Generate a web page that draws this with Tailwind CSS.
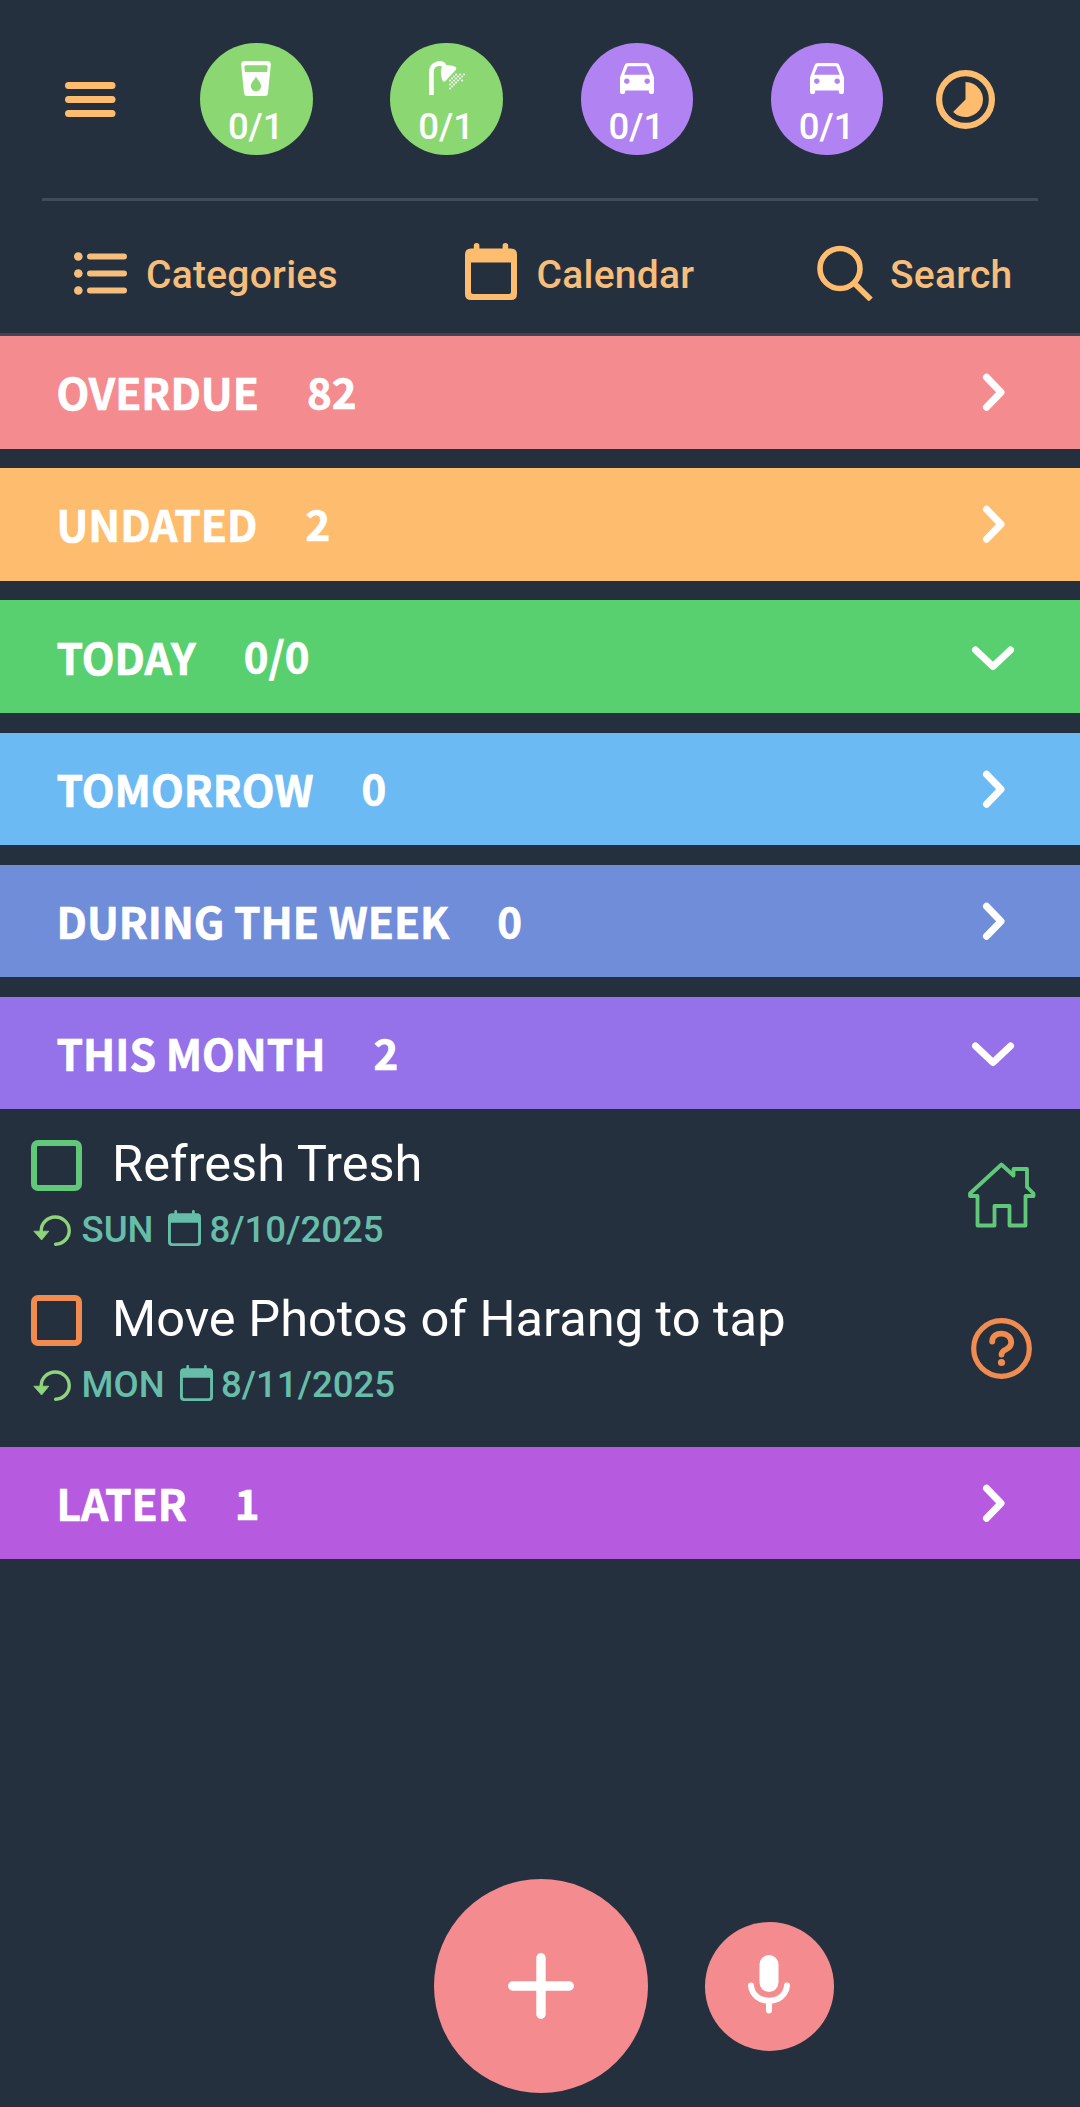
<!DOCTYPE html>
<html lang="en">
<head>
<meta charset="utf-8">
<title>Tasks</title>
<script src="https://cdn.jsdelivr.net/npm/@tailwindcss/browser@4"></script>
</head>
<body class="bg-[#25303f]">
<svg class="hidden">
  <symbol id="right" viewBox="0 0 44 44"><path d="M15.500 7.300 L30 22.300 L15.500 37.300" fill="none" stroke="currentColor" stroke-width="7" stroke-linecap="round" stroke-linejoin="round"/></symbol>
  <symbol id="down" viewBox="0 0 44 44"><path d="M4.5 15 L22 31.500 L39.5 15" fill="none" stroke="currentColor" stroke-width="7" stroke-linecap="round" stroke-linejoin="round"/></symbol>
  <symbol id="car" viewBox="0 0 34 31"><path fill="currentColor" fill-rule="evenodd" d="M8 0H26Q28.6 0 29.4 2.3L34 14.5V28.4Q34 31 31.4 31Q28.8 31 28.8 28.4V27.4H5.2V28.4Q5.2 31 2.6 31Q0 31 0 28.4V14.5L4.6 2.3Q5.4 0 8 0ZM7.8 3.2L4.2 11.8H29.8L26.2 3.2ZM6.8 15.4a2.8 2.8 0 1 0 .01 0ZM27.2 15.4a2.8 2.8 0 1 0 .01 0Z"/></symbol>
  <symbol id="cal" viewBox="0 0 52 57"><path fill="currentColor" fill-rule="evenodd" d="M6 5.5H8.8V2.8a2.8 2.8 0 0 1 5.6 0V5.5H37.6V2.8a2.8 2.8 0 0 1 5.6 0V5.5H46Q52 5.5 52 11.5V51Q52 57 46 57H6Q0 57 0 51V11.5Q0 5.5 6 5.5ZM6 19.5V49Q6 51 8 51H44Q46 51 46 49V19.5Z"/></symbol>
  <symbol id="calthin" viewBox="0 0 33 36"><path fill="currentColor" fill-rule="evenodd" d="M4 3.3H6.3V1.4a1.4 1.4 0 0 1 2.8 0V3.3H24V1.4a1.4 1.4 0 0 1 2.8 0V3.3H29Q33 3.3 33 7.3V32Q33 36 29 36H4Q0 36 0 32V7.3Q0 3.3 4 3.3ZM2.9 12.8V31.6Q2.9 33.2 4.5 33.2H28.5Q30.1 33.2 30.1 31.6V12.8Z"/></symbol>
  <symbol id="repeat" viewBox="0 0 38 31"><path d="M8.2 17 V15.5 A14 13.6 0 1 1 22.6 29.2" fill="none" stroke="currentColor" stroke-width="3.4" stroke-linecap="round"/><path fill="currentColor" d="M0.8 16.2H15.8L8.6 25Z" stroke="currentColor" stroke-width=".8" stroke-linejoin="round"/></symbol>
</svg>
<div class="flex h-[2107px] w-[1080px] flex-col overflow-hidden bg-[#25303f] font-['Roboto'] text-white">
  <header class="shrink-0 px-[42px]">
    <div class="flex h-[198px] items-center pl-[22.500px] text-[#fdbc6e]">
      <svg class="h-[35px] w-[51px]" viewBox="0 0 51 35"><g fill="currentColor"><rect width="50.500" height="7" rx="3.5"/><rect y="14" width="50.500" height="7" rx="3.5"/><rect y="28" width="50.500" height="7" rx="3.5"/></g></svg>
      <div class="ml-[84.500px] flex gap-[77.800px] text-white">
        <div class="flex size-[112.500px] flex-col items-center rounded-full bg-[#8bd772] pt-[18px]">
          <svg class="h-[35px] w-[30px]" viewBox="0 0 30 35"><path fill="currentColor" fill-rule="evenodd" d="M3.5 0H26.5Q30 0 29.8 4L27 32Q26.7 35 24 35H6Q3.3 35 3 32L.2 4Q0 0 3.5 0ZM3.4 6L3.9 11H26.1L26.6 6Q26.7 4.2 25 4.2H5Q3.3 4.2 3.4 6ZM15 15.5C13.5 19 9.8 21.8 9.8 25A5.2 5.2 0 0 0 20.2 25C20.2 21.8 16.5 19 15 15.5Z"/></svg>
          <span class="mt-[12px] mr-[1px] text-[36.500px] leading-[38px] font-medium">0/1</span>
        </div>
        <div class="flex size-[112.500px] flex-col items-center rounded-full bg-[#8bd772] pt-[18px]">
          <svg class="h-[35px] w-[36px]" viewBox="0 0 36 35"><path d="M2.4 34V11C2.4 1.5 12.5 1 15.5 5" fill="none" stroke="currentColor" stroke-width="4.8"/><path fill="currentColor" d="M13.5 5.5C16 3 21 4.500 25 5.300C27.600 6 27.800 7.800 26.700 9L16.500 20C15.500 21 14 20.800 13.500 19.500C12 15 10.800 8 13.500 5.500Z"/><g fill="none" stroke="currentColor" stroke-width="2" stroke-linecap="round" stroke-dasharray="0 2.830"><path d="M27 13.500L20.500 20M31 13.500L20.500 24M35 13.500L20.500 28M33 19.500L31 21.500"/></g></svg>
          <span class="mt-[12px] mr-[1px] text-[36.500px] leading-[38px] font-medium">0/1</span>
        </div>
        <div class="flex size-[112.500px] flex-col items-center rounded-full bg-[#b182f1] pt-[20px]">
          <svg class="h-[31px] w-[34px]"><use href="#car"/></svg>
          <span class="mt-[14px] mr-[1px] text-[36.500px] leading-[38px] font-medium">0/1</span>
        </div>
        <div class="flex size-[112.500px] flex-col items-center rounded-full bg-[#b182f1] pt-[20px]">
          <svg class="h-[31px] w-[34px]"><use href="#car"/></svg>
          <span class="mt-[14px] mr-[1px] text-[36.500px] leading-[38px] font-medium">0/1</span>
        </div>
      </div>
      <svg class="ml-[52.500px] size-[59px]" viewBox="0 0 59 59"><circle cx="29.500" cy="29.500" r="26.400" fill="none" stroke="currentColor" stroke-width="6.200"/><path fill="currentColor" d="M29.500 29.500V12A17.500 17.500 0 1 1 17.100 41.900Z"/></svg>
    </div>
    <div class="h-[3px] bg-[#424b58]"></div>
  </header>
  <nav class="flex h-[132px] shrink-0 items-center text-[39px] leading-[44px] font-medium tracking-[0.25px] text-[#f6bd7b]">
    <div class="ml-[74px] flex items-center">
      <svg class="mt-[13px] h-[43px] w-[53px]" viewBox="0 0 53 43"><g fill="currentColor"><circle cx="4.300" cy="4.500" r="4.300"/><circle cx="4.300" cy="21.500" r="4.300"/><circle cx="4.300" cy="38.500" r="4.300"/><rect x="13" y="1.500" width="40" height="6" rx="3"/><rect x="13" y="18.500" width="40" height="6" rx="3"/><rect x="13" y="35.500" width="40" height="6" rx="3"/></g></svg>
      <span class="mt-[16px] ml-[19px] w-[192px]">Categories</span>
    </div>
    <div class="ml-[126.500px] flex items-center">
      <svg class="mt-[8px] h-[57px] w-[52px] text-[#fdbc6e]"><use href="#cal"/></svg>
      <span class="mt-[16px] ml-[20px] w-[160px]">Calendar</span>
    </div>
    <div class="ml-[120.500px] flex items-center">
      <svg class="mt-[12px] h-[56px] w-[56px] text-[#fdbc6e]" viewBox="0 0 56 56" fill="none" stroke="currentColor" stroke-width="5.600"><circle cx="23" cy="23.500" r="20"/><path d="M37 38L53.800 54.500"/></svg>
      <span class="mt-[16px] ml-[17px]">Search</span>
    </div>
  </nav>
  <div class="h-[3px] shrink-0 bg-[#424454]"></div>

  <main class="flex shrink-0 flex-col gap-[19.700px] font-['Noto_Sans_CJK_SC'] text-[42.600px] leading-[60px] font-bold [-webkit-text-stroke:0.7px_white]">
    <div class="flex h-[112.500px] items-center bg-[#f48c8f] pr-[65px] pl-[56.500px]"><span>OVERDUE</span><span class="mb-[3px] ml-[48px] text-[42px]">82</span><svg class="ml-auto size-[44px]"><use href="#right"/></svg></div>
    <div class="flex h-[112.500px] items-center bg-[#fdbc6e] pr-[65px] pl-[56.500px]"><span>UNDATED</span><span class="mb-[3px] ml-[48px] text-[42px]">2</span><svg class="ml-auto size-[44px]"><use href="#right"/></svg></div>
    <div class="flex h-[112.500px] items-center bg-[#59d06f] pr-[65px] pl-[56.500px]"><span>TODAY</span><span class="mb-[3px] ml-[48px] text-[42px]">0/0</span><svg class="ml-auto size-[44px]"><use href="#down"/></svg></div>
    <div class="flex h-[112.500px] items-center bg-[#6cbaf3] pr-[65px] pl-[56.500px]"><span>TOMORROW</span><span class="mb-[3px] ml-[48px] text-[42px]">0</span><svg class="ml-auto size-[44px]"><use href="#right"/></svg></div>
    <div class="flex h-[112.500px] items-center bg-[#708dda] pr-[65px] pl-[56.500px]"><span>DURING THE WEEK</span><span class="mb-[3px] ml-[48px] text-[42px]">0</span><svg class="ml-auto size-[44px]"><use href="#right"/></svg></div>
    <div class="flex h-[112.500px] items-center bg-[#9572e9] pr-[65px] pl-[56.500px]"><span>THIS MONTH</span><span class="mb-[3px] ml-[48px] text-[42px]">2</span><svg class="ml-auto size-[44px]"><use href="#down"/></svg></div>
  </main>

  <section class="h-[337.500px] shrink-0 pt-[16px]">
    <article class="flex h-[155px] pl-[31px]">
      <div class="w-[936.500px]">
        <div class="flex h-[82px] items-center text-[50.600px]"><span class="mb-[2px] size-[51px] rounded-[7px] border-6 border-[#61c87a]"></span><span class="mb-[4px] ml-[30px] leading-[60px]">Refresh Tresh</span></div>
        <div class="flex h-[46px] items-center pl-[1.500px] text-[36.600px] leading-[44px] font-medium text-[#66bda9]"><svg class="h-[31px] w-[38px] text-[#8fd37c]"><use href="#repeat"/></svg><span class="ml-[11px] w-[86.500px]">SUN</span><svg class="mb-[4px] h-[36px] w-[33px]"><use href="#calthin"/></svg><span class="mb-px ml-[8.500px]">8/10/2025</span></div>
      </div>
      <svg class="mt-[36.500px] h-[66px] w-[68px]" viewBox="0 0 68 66" fill="none" stroke="#61c87a" stroke-width="3.800" stroke-linejoin="round"><path d="M33.500 2.500L2 31.500V34H9.500V63.500H26.500V44H41.500V63.500H57.500V34H65.500V31.500L59 25V7H45.500V13.500Z"/></svg>
    </article>
    <article class="flex h-[155px] pl-[31px]">
      <div class="w-[939.500px]">
        <div class="flex h-[82px] items-center text-[50.600px]"><span class="mb-[2px] size-[51px] rounded-[7px] border-6 border-[#f08c50]"></span><span class="mb-[4px] ml-[30px] leading-[60px]">Move Photos of Harang to tap</span></div>
        <div class="flex h-[46px] items-center pl-[1.500px] text-[36.600px] leading-[44px] font-medium text-[#66bda9]"><svg class="h-[31px] w-[38px] text-[#8fd37c]"><use href="#repeat"/></svg><span class="ml-[11px] w-[98px]">MON</span><svg class="mb-[4px] h-[36px] w-[33px]"><use href="#calthin"/></svg><span class="mb-px ml-[8.500px]">8/11/2025</span></div>
      </div>
      <svg class="mt-[37.500px] h-[61px] w-[61px]" viewBox="0 0 61 61" fill="none" stroke="#f08c50"><circle cx="30.500" cy="30.500" r="27.800" stroke-width="5.200"/><path d="M21.200 23.500C21.200 12.500 40.200 13 40.200 24.500C40.200 32.500 30.500 30.500 30.500 36.500" stroke-width="5.800" stroke-linecap="round"/><circle cx="30.500" cy="44.500" r="3.600" fill="#f08c50" stroke="none"/></svg>
    </article>
  </section>

  <div class="flex h-[112.500px] shrink-0 items-center bg-[#b65ae0] pr-[65px] pl-[56.500px] font-['Noto_Sans_CJK_SC'] text-[42.600px] leading-[60px] font-bold [-webkit-text-stroke:0.7px_white]"><span>LATER</span><span class="mb-[3px] ml-[48px] text-[42px]">1</span><svg class="ml-auto size-[44px]"><use href="#right"/></svg></div>

  <footer class="mt-auto mb-[14px] ml-[434px] flex items-center gap-[56.500px]">
    <div class="flex size-[214px] items-center justify-center rounded-full bg-[#f48c8f]"><svg class="size-[66px]" viewBox="0 0 66 66"><path d="M33 4.700V61.300M4.700 33H61.300" stroke="#fff" stroke-width="9.400" stroke-linecap="round"/></svg></div>
    <div class="flex size-[129px] items-center justify-center rounded-full bg-[#f48c8f]"><svg class="mb-[3px] h-[59px] w-[42px]" viewBox="0 0 42 59"><rect x="11.500" width="19" height="37" rx="9.500" fill="#fff"/><path d="M3 30.500C4 40.500 12 45.700 21 45.700S38 40.500 39 30.500M21 46V55.500" fill="none" stroke="#fff" stroke-width="6" stroke-linecap="round"/></svg></div>
  </footer>
</div>
</body>
</html>
